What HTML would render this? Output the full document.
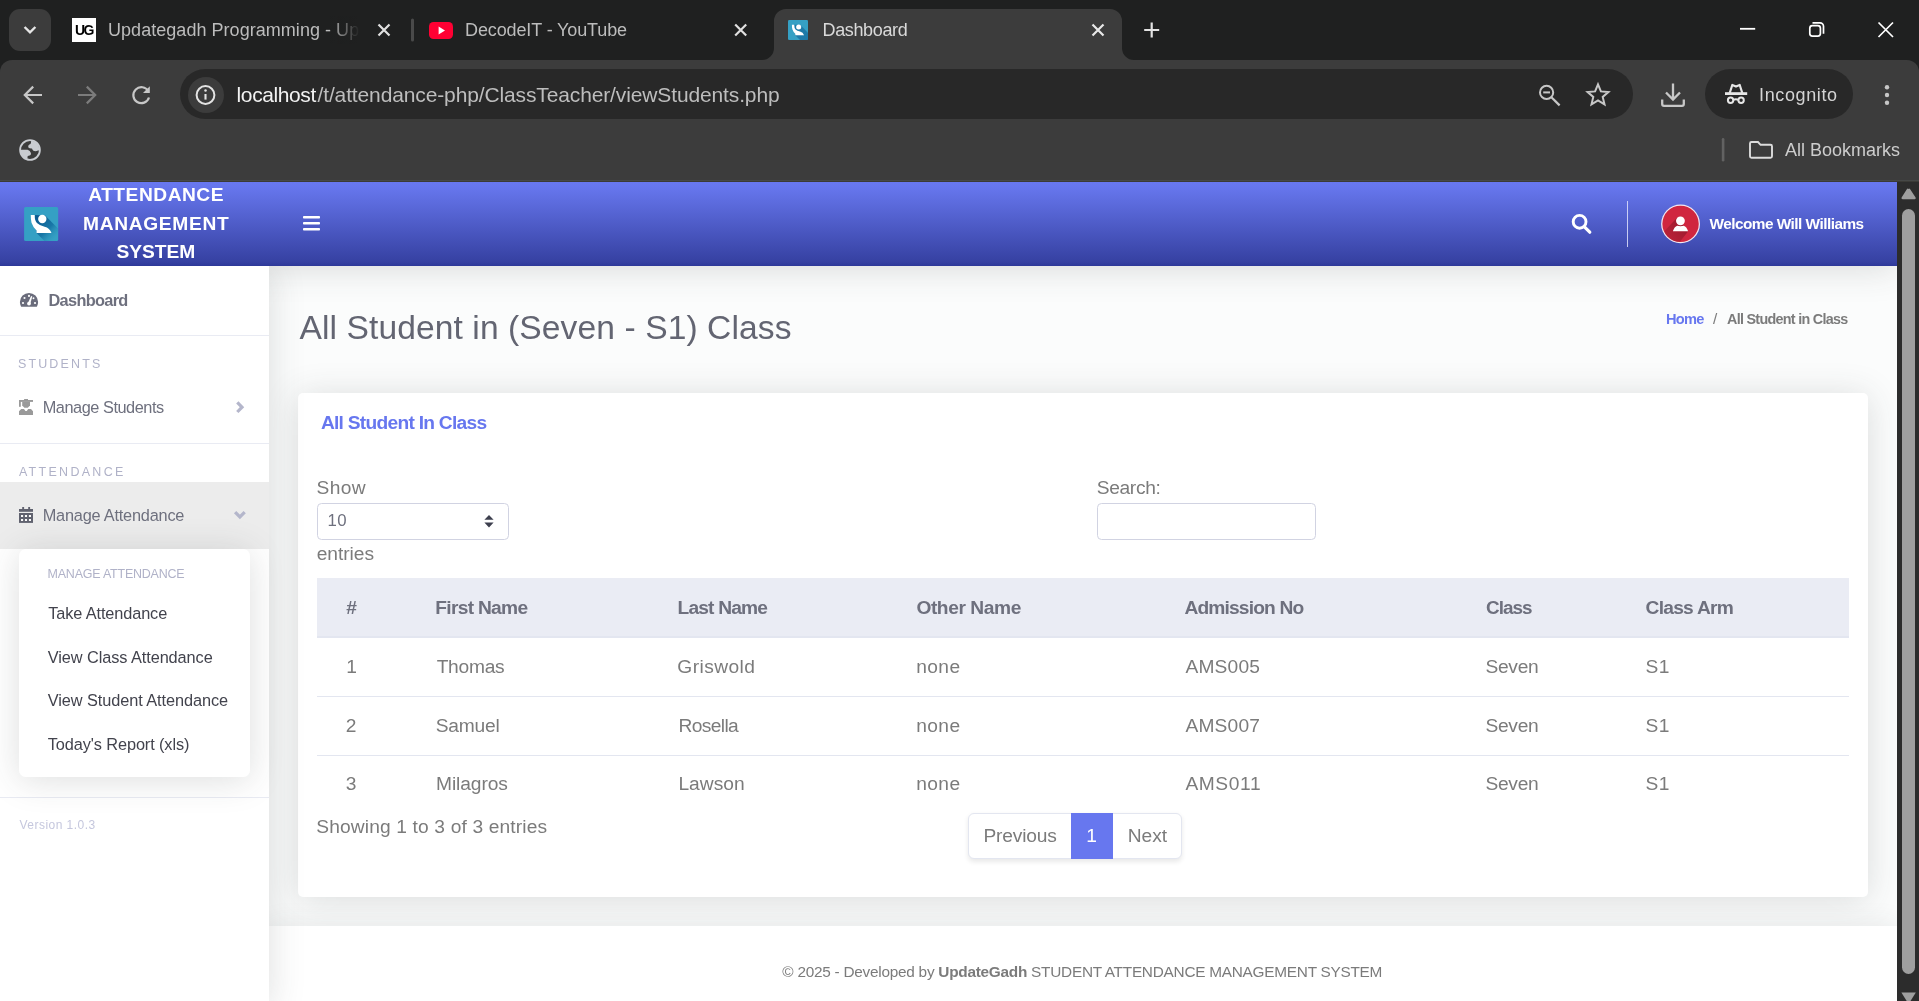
<!DOCTYPE html>
<html><head><meta charset="utf-8"><title>Dashboard</title>
<style>
html,body{margin:0;padding:0}
body{width:1919px;height:1001px;overflow:hidden;position:relative;background:#1f2020;font-family:"Liberation Sans",sans-serif}
.a{position:absolute}
.t{position:absolute;line-height:1;white-space:nowrap;transform-origin:0 0}
svg{position:absolute;overflow:visible}
</style></head><body>

<!-- ===== TAB STRIP ===== -->
<div class="a" style="left:9px;top:9px;width:42px;height:42px;border-radius:11px;background:#3c3c3c"></div>
<svg style="left:0;top:0" width="1919" height="182">
 <!-- tab search chevron -->
 <polyline points="24.6,27 30,32.4 35.4,27" fill="none" stroke="#e6e6e6" stroke-width="2.4"/>
 <!-- tab close Xs -->
 <g stroke="#e0e0e0" stroke-width="2.2" fill="none">
  <path d="M378.5,24.5 l11,11 m0,-11 l-11,11"/>
  <path d="M735.2,24.5 l11,11 m0,-11 l-11,11"/>
 </g>
 <!-- separator -->
 <rect x="411" y="18.5" width="3" height="23" rx="1.5" fill="#4a4a4a"/>
 <!-- active tab shape -->
 <path d="M762,60 A12,12 0 0 0 774,48 V21 A12,12 0 0 1 786,9 H1110 A12,12 0 0 1 1122,21 V48 A12,12 0 0 0 1134,60 Z" fill="#3c3c3c"/>
 <path d="M1092.5,24.5 l11,11 m0,-11 l-11,11" stroke="#e8e8e8" stroke-width="2.2" fill="none"/>
 <!-- plus -->
 <path d="M1144.2,30 h15 M1151.7,22.5 v15" stroke="#e3e3e3" stroke-width="2.2" fill="none"/>
 <!-- window controls -->
 <path d="M1740,28.8 h15.2" stroke="#fff" stroke-width="1.8"/>
 <path d="M1812.5,22.8 h7.5 a3.5,3.5 0 0 1 3.5,3.5 v7.5" stroke="#fff" stroke-width="1.7" fill="none"/>
 <rect x="1809.8" y="25.6" width="10.6" height="10.6" rx="2.6" stroke="#fff" stroke-width="1.7" fill="none"/>
 <path d="M1878.5,22.5 l14.5,14.5 m0,-14.5 l-14.5,14.5" stroke="#fff" stroke-width="1.7" fill="none"/>
</svg>
<!-- favicon 1: UG -->
<div class="a" style="left:72px;top:18px;width:24px;height:24px;background:#fff"></div>
<div class="t" style="left:74.5px;top:22.5px;font-size:14px;font-weight:700;color:#000;letter-spacing:-1.6px;will-change:transform">UG</div>
<div class="a" style="left:330px;top:16px;width:32px;height:28px;z-index:5;background:linear-gradient(90deg,rgba(31,32,32,0),#1f2020 92%)"></div>
<!-- favicon 2: youtube -->
<div class="a" style="left:429px;top:21.5px;width:24px;height:17px;border-radius:4.5px;background:#ff0033"></div>
<svg style="left:429px;top:21.5px" width="24" height="17"><path d="M9.6,4.6 L16,8.5 L9.6,12.4 Z" fill="#fff"/></svg>
<!-- favicon 3 -->
<svg style="left:788px;top:20px" width="20" height="20" viewBox="0 0 34 34">
  <rect x="0" y="0" width="34" height="34" rx="2" fill="#35a0c4"/>
  <path d="M10.5,8 L21,8.6 L34,21.6 V34 H20.4 L12.4,26 Z" fill="#16699d" opacity=".7"/>
  <circle cx="18.15" cy="11.95" r="4.3" fill="#fff"/>
  <path d="M6.66,8.03 H10.56 Q10.4,13.6 12.8,16 Q15.4,18.6 20.4,19.6 Q25.6,20.8 27.3,25.96 H12.4 V23.4 Q8.6,19.4 7.4,15.6 Q6.6,12.4 6.66,8.03 Z" fill="#fff"/>
</svg>

<!-- ===== TOOLBAR ===== -->
<div class="a" style="left:0;top:60px;width:1919px;height:122px;background:#3c3c3c;border-radius:12px 12px 0 0"></div>
<div class="a" style="left:0;top:180px;width:1919px;height:1px;background:#464847"></div>
<div class="a" style="left:0;top:181px;width:1919px;height:1px;background:#3b3b37"></div>
<div class="a" style="left:180px;top:69.2px;width:1453px;height:50.3px;border-radius:25px;background:#282828"></div>
<div class="a" style="left:187.5px;top:77px;width:36px;height:36px;border-radius:18px;background:#3c3c3c"></div>
<div class="a" style="left:1705px;top:69.2px;width:148px;height:50.3px;border-radius:25px;background:#282828"></div>
<svg style="left:0;top:0" width="1919" height="182" fill="none" stroke-linecap="butt">
 <!-- back -->
 <path d="M42,95 H25.5 M33.2,86.6 L24.8,95 L33.2,103.4" stroke="#c7c7c7" stroke-width="2.2"/>
 <!-- forward -->
 <path d="M78,95 H94.5 M86.8,86.6 L95.2,95 L86.8,103.4" stroke="#7c7c7c" stroke-width="2.2"/>
 <!-- reload -->
 <path d="M148.3,91.2 A8,8 0 1 0 149,97.5" stroke="#c7c7c7" stroke-width="2.2"/>
 <path d="M149.8,86.2 V93 H143 Z" fill="#c7c7c7" stroke="none"/>
 <!-- info -->
 <circle cx="205.5" cy="95" r="8.9" stroke="#e3e3e3" stroke-width="2"/>
 <path d="M205.5,94 v5.6" stroke="#e3e3e3" stroke-width="2.1"/>
 <circle cx="205.5" cy="90.6" r="1.25" fill="#e3e3e3" stroke="none"/>
 <!-- zoom -->
 <circle cx="1546.6" cy="92.4" r="6.6" stroke="#c7c7c7" stroke-width="2"/>
 <path d="M1551.4,97.2 L1559.6,105.4" stroke="#c7c7c7" stroke-width="2.2"/>
 <path d="M1543.2,92.4 h6.8" stroke="#c7c7c7" stroke-width="2"/>
 <!-- star -->
 <path d="M1598,84.4 L1600.9,91.4 L1608.4,92 L1602.7,96.9 L1604.5,104.3 L1598,100.3 L1591.5,104.3 L1593.3,96.9 L1587.6,92 L1595.1,91.4 Z" stroke="#c7c7c7" stroke-width="2" stroke-linejoin="miter"/>
 <!-- download -->
 <path d="M1673,83.5 V99 M1666,92.5 L1673,99.5 L1680,92.5" stroke="#c7c7c7" stroke-width="2.3"/>
 <path d="M1662.2,99.5 V104 a1.8,1.8 0 0 0 1.8,1.8 H1682 a1.8,1.8 0 0 0 1.8,-1.8 V99.5" stroke="#c7c7c7" stroke-width="2.3"/>
 <!-- incognito -->
 <rect x="1725" y="92.2" width="22.2" height="2.8" fill="#e6e6e6" stroke="none"/>
 <path d="M1729.7,93 L1732.3,85 L1736,86.6 L1739.7,85 L1742.3,93" stroke="#e6e6e6" stroke-width="2.2" stroke-linejoin="round" fill="none"/>
 <circle cx="1730.6" cy="100.2" r="2.7" stroke="#e6e6e6" stroke-width="2"/>
 <circle cx="1741.1" cy="100.2" r="2.7" stroke="#e6e6e6" stroke-width="2"/>
 <path d="M1733.3,99.8 Q1735.85,98.6 1738.4,99.8" stroke="#e6e6e6" stroke-width="1.9"/>
 <!-- dots -->
 <g fill="#c7c7c7" stroke="none"><circle cx="1887" cy="87.3" r="2.2"/><circle cx="1887" cy="95" r="2.2"/><circle cx="1887" cy="102.7" r="2.2"/></g>
 <!-- bookmarks bar -->
 <rect x="1721.8" y="138" width="2.6" height="23.5" rx="1.3" fill="#626262" stroke="none"/>
 <path d="M1750,156.2 V143.5 a1.5,1.5 0 0 1 1.5,-1.5 H1758 L1760.6,144.8 H1770.5 a1.5,1.5 0 0 1 1.5,1.5 V156.2 a1.5,1.5 0 0 1 -1.5,1.5 H1751.5 a1.5,1.5 0 0 1 -1.5,-1.5 Z" stroke="#dcdcdc" stroke-width="1.9"/>
 <!-- globe -->
 <circle cx="30" cy="150" r="9.9" fill="none" stroke="#c9ccd1" stroke-width="1.8"/>
 <clipPath id="glc"><circle cx="30" cy="150" r="9.6"/></clipPath>
 <g clip-path="url(#glc)" fill="#c9ccd1" stroke="none">
 <path d="M31.2,140 L41,140 L41,150 Q39,150.8 38,150.4 Q35.6,151.8 33.4,150.7 Q32.4,149.9 32,148.5 Q29.6,148.7 28.4,147.4 Q27.8,145.6 29.4,144.6 Q30.8,144.4 31,142.8 Z"/>
 <path d="M19,149.8 H27.6 Q30.2,150.6 30.9,153 Q31.2,155.2 29.6,155.6 L27.8,155.9 Q27.2,157 27.6,161 L19,161 Z"/>
 </g>
</svg>

<!-- ===== PAGE ===== -->
<div class="a" id="page" style="left:0;top:182px;width:1897px;height:819px;background:#fbfcfc;overflow:hidden">
 <!-- card -->
 <div class="a" style="left:298px;top:211px;width:1570px;height:504px;background:#fff;border-radius:5px;box-shadow:0 3px 33.6px 0 rgba(52,58,60,.17)"></div>
 <!-- footer -->
 <div class="a" style="left:269px;top:743.7px;width:1628px;height:80px;background:#fff;box-shadow:0 -4px 22px rgba(52,58,60,.085)"></div>
 <!-- header shadow -->
 <div class="a" style="left:0;top:0;width:1897px;height:84px;box-shadow:0 3px 33.6px 0 rgba(52,58,60,.17)"></div>
 <!-- sidebar -->
 <div class="a" style="left:0;top:84px;width:269px;height:740px;background:#fff;box-shadow:0 3px 33.6px 0 rgba(52,58,60,.17)"></div>
 <!-- header -->
 <div class="a" style="left:0;top:0;width:1897px;height:84px;background:linear-gradient(#6878f0 0%,#6777ee 5%,#3641a2 95%,#2d3899 100%)"></div>
</div>

<!-- sidebar details -->
<div class="a" style="left:0;top:335px;width:269px;height:1px;background:#e9ebf3"></div>
<div class="a" style="left:0;top:443px;width:269px;height:1px;background:#e9ebf3"></div>
<div class="a" style="left:0;top:797px;width:269px;height:1px;background:#e9ebf3"></div>
<div class="a" style="left:0;top:482.3px;width:269px;height:66.5px;background:#ececec"></div>
<div class="a" style="left:19px;top:548.8px;width:231px;height:228px;background:#fff;border-radius:6.5px;box-shadow:0 3px 33.6px 0 rgba(52,58,60,.17)"></div>

<!-- table -->
<div class="a" style="left:317px;top:578px;width:1532px;height:58.3px;background:#eaecf4;border-bottom:2px solid #e3e6f0"></div>
<div class="a" style="left:317px;top:696px;width:1532px;height:1px;background:#e3e6f0"></div>
<div class="a" style="left:317px;top:754.7px;width:1532px;height:1px;background:#e3e6f0"></div>
<!-- select + search -->
<div class="a" style="left:317px;top:503px;width:189.6px;height:34.8px;border:1px solid #d1d3e2;border-radius:4.5px;background:#fff"></div>
<svg style="left:484px;top:515px" width="10" height="13"><path d="M5,0 L9.6,4.8 H0.4 Z M0.4,7.6 H9.6 L5,12.4 Z" fill="#3d3f4e"/></svg>
<div class="a" style="left:1097.2px;top:503px;width:216.6px;height:34.8px;border:1px solid #d1d3e2;border-radius:4.5px;background:#fff"></div>
<!-- pagination -->
<div class="a" style="left:967.6px;top:813px;width:212px;height:44px;border:1px solid #e3e6f0;border-radius:6px;background:#fff;box-shadow:0 2.4px 4.8px rgba(0,0,0,.09)"></div>
<div class="a" style="left:1071px;top:813px;width:42px;height:46px;background:#6777ef"></div>

<!-- header items -->
<svg style="left:23.75px;top:206.9px" width="34.3" height="34.1" viewBox="0 0 34 34">
 <defs><linearGradient id="lgg" gradientUnits="userSpaceOnUse" x1="13" y1="13" x2="31" y2="31"><stop offset="0" stop-color="#0d5c92" stop-opacity="1"/><stop offset=".55" stop-color="#1470a2" stop-opacity=".85"/><stop offset="1" stop-color="#2a90b8" stop-opacity="0"/></linearGradient><clipPath id="lgc"><rect x="0" y="0" width="34" height="34" rx="1.5"/></clipPath></defs><g>
  <rect x="0" y="0" width="34" height="34" rx="1.5" fill="#35a0c4"/>
  <path d="M10.5,8 L21,8.6 L40,27.6 V40 H26.4 L12.4,26 Z" fill="url(#lgg)" clip-path="url(#lgc)"/>
  <circle cx="18.15" cy="11.95" r="4.15" fill="#fff"/>
  <path d="M6.66,8.03 H10.56 Q10.4,13.6 12.8,16 Q15.4,18.6 20.4,19.6 Q25.6,20.8 27.3,25.96 H12.4 V23.4 Q8.6,19.4 7.4,15.6 Q6.6,12.4 6.66,8.03 Z" fill="#fff"/>
 </g>
</svg>
<svg style="left:0;top:0" width="1919" height="1001">
 <!-- hamburger -->
 <g fill="#fff"><rect x="303" y="216" width="17" height="2.6" rx=".8"/><rect x="303" y="222" width="17" height="2.6" rx=".8"/><rect x="303" y="228" width="17" height="2.6" rx=".8"/></g>
 <!-- search -->
 <circle cx="1579.6" cy="221.8" r="6.4" fill="none" stroke="#fff" stroke-width="2.9"/>
 <path d="M1584.4,226.8 L1589.8,232.2" stroke="#fff" stroke-width="3.2" stroke-linecap="round"/>
 <!-- divider -->
 <rect x="1627" y="201" width="1" height="46" fill="#dfe2fb" opacity=".85"/>
 <!-- avatar -->
 <circle cx="1680.55" cy="223.9" r="19.4" fill="#f3e9f3"/>
 <circle cx="1680.55" cy="223.9" r="18.2" fill="#d0263f"/>
 <clipPath id="avc"><circle cx="1680.55" cy="223.9" r="18.2"/></clipPath>
 <linearGradient id="avg" x1="1" y1="0" x2="0" y2="1"><stop offset=".2" stop-color="#8d1729" stop-opacity=".72"/><stop offset=".9" stop-color="#8d1729" stop-opacity=".12"/></linearGradient>
 <g clip-path="url(#avc)"><path d="M1677,217.8 L1660,236 L1672,252 L1688,231.4 L1684,226 Z" fill="url(#avg)"/></g>
 <circle cx="1680.45" cy="220.8" r="4.4" fill="#fff"/>
 <path d="M1672.9,231.2 Q1674.4,226.6 1677.2,225.7 Q1680.5,226.6 1683.8,225.7 Q1686.6,226.6 1688.1,231.2 Z" fill="#fff"/>

 <!-- sidebar icons -->
 <!-- tachometer -->
 <path d="M29,292.9 A9.1,9.1 0 0 0 19.9,302 Q19.9,304.6 20.9,306.2 Q21.2,306.8 21.8,306.8 H36.2 Q36.8,306.8 37.1,306.2 Q38.1,304.6 38.1,302 A9.1,9.1 0 0 0 29,292.9 Z" fill="#6a6c7b"/>
 <g fill="#fff"><circle cx="29" cy="295.9" r="1.05"/><circle cx="24.5" cy="298" r="1.05"/><circle cx="33.5" cy="298.2" r=".95"/><circle cx="23" cy="303" r="1.1"/><circle cx="35" cy="303" r="1.1"/><circle cx="29" cy="303.6" r="1.9"/><path d="M28.1,302.8 L31.1,296 L32.3,296.4 L30.3,303.4 Z"/></g>
 <!-- user graduate -->
 <g fill="#9a9a9a">
  <rect x="19" y="400" width="14" height="1.9"/><rect x="24.1" y="399" width="3.9" height="1.4"/>
  <rect x="19" y="400" width="1.8" height="6.8"/>
  <path d="M22.2,401.8 H30 V405.6 L27.8,407.8 H24.4 L22.2,405.6 Z"/>
  <path d="M19,414.9 V411.2 L21.2,409 H24 L25.4,410.9 H26.8 L28.2,409 H31 L33,411.2 V414.9 Z"/>
 </g>
 <!-- chevron right -->
 <path d="M237.3,402.4 L242,407.2 L237.3,412" fill="none" stroke="#b4b6cb" stroke-width="3.2"/>
 <!-- calendar -->
 <g fill="#60626f">
  <rect x="19" y="509" width="14" height="2.8"/>
  <rect x="22.2" y="507" width="1.9" height="2.4"/><rect x="28.2" y="507" width="1.9" height="2.4"/>
  <rect x="19" y="513" width="14" height="9.9"/>
 </g>
 <g fill="#fbfbfb"><rect x="21" y="515" width="2.1" height="2"/><rect x="24.95" y="515" width="2.1" height="2"/><rect x="28.9" y="515" width="2.1" height="2"/><rect x="21" y="519" width="2.1" height="2"/><rect x="24.95" y="519" width="2.1" height="2"/><rect x="28.9" y="519" width="2.1" height="2"/></g>
 <!-- chevron down -->
 <path d="M235.1,512.2 L239.9,517 L244.7,512.2" fill="none" stroke="#b4b6cb" stroke-width="3.2"/>
</svg>

<!-- scrollbar -->
<div class="a" style="left:1897px;top:182px;width:22px;height:819px;background:#2c2c2c"></div>
<div class="a" style="left:1902px;top:209px;width:13px;height:765px;border-radius:6.5px;background:#9f9f9f"></div>
<svg style="left:1897px;top:182px" width="22" height="819"><path d="M11.5,7 Q12.3,6.2 13,7 L18.6,15.5 Q19.2,17 17.6,17.2 H5.6 Q4,17 4.6,15.5 L10,7 Q10.8,6.2 11.5,7 Z" fill="#9f9f9f"/><path d="M4.4,810.5 H18.8 L11.6,822 Z" fill="#9f9f9f"/></svg>

<div id="txt" class="a" style="left:0;top:0;width:1919px;height:1001px;will-change:transform">
<div class="t" style="left:108.0px;top:21.36px;font-size:18px;color:#bcbcbc;letter-spacing:0.039px;">Updategadh Programming - Up</div>
<div class="t" style="left:465.0px;top:21.36px;font-size:18px;color:#bcbcbc;letter-spacing:-0.117px;">DecodeIT - YouTube</div>
<div class="t" style="left:822.5px;top:21.36px;font-size:18px;color:#dadada;letter-spacing:-0.349px;">Dashboard</div>
<div class="t" style="left:236.6px;top:83.92px;font-size:21px;color:#f2f2f2;letter-spacing:-0.4px;">localhost</div>
<div class="t" style="left:317.5px;top:83.92px;font-size:21px;color:#bdbdbd;letter-spacing:-0.13px;">/t/attendance-php/ClassTeacher/viewStudents.php</div>
<div class="t" style="left:1759.0px;top:85.76px;font-size:18px;color:#d4d4d4;letter-spacing:0.625px;">Incognito</div>
<div class="t" style="left:1785.0px;top:140.76px;font-size:18px;color:#cdcdcd;">All Bookmarks</div>
<div class="t" style="left:88.2px;top:184.75px;font-size:19.2px;color:#fff;font-weight:700;letter-spacing:0.511px;">ATTENDANCE</div>
<div class="t" style="left:83.0px;top:213.55px;font-size:19.2px;color:#fff;font-weight:700;letter-spacing:0.667px;">MANAGEMENT</div>
<div class="t" style="left:116.6px;top:242.35px;font-size:19.2px;color:#fff;font-weight:700;letter-spacing:-0.04px;">SYSTEM</div>
<div class="t" style="left:1709.5px;top:216.0px;font-size:15.36px;color:#fff;font-weight:700;letter-spacing:-0.52px;">Welcome Will Williams</div>
<div class="t" style="left:299.5px;top:310.56px;font-size:33.6px;color:#636572;letter-spacing:0.093px;">All Student in (Seven - S1) Class</div>
<div class="t" style="left:1665.6px;top:311.0px;font-size:15.36px;color:#6777ef;font-weight:700;letter-spacing:-0.768px;transform:scaleX(0.9512);">Home</div>
<div class="t" style="left:1712.9px;top:311.0px;font-size:15.36px;color:#7b7b7b;">/</div>
<div class="t" style="left:1727.4px;top:311.0px;font-size:15.36px;color:#7b7b7b;font-weight:700;letter-spacing:-0.768px;transform:scaleX(0.935);">All Student in Class</div>
<div class="t" style="left:320.9px;top:412.5px;font-size:19.2px;color:#6777ef;font-weight:700;letter-spacing:-0.737px;">All Student In Class</div>
<div class="t" style="left:316.5px;top:477.75px;font-size:19.2px;color:#7b7b7b;letter-spacing:0.333px;">Show</div>
<div class="t" style="left:327.5px;top:512.68px;font-size:16.8px;color:#6e707e;letter-spacing:0.5px;">10</div>
<div class="t" style="left:316.75px;top:543.5px;font-size:19.2px;color:#7b7b7b;letter-spacing:-0.05px;">entries</div>
<div class="t" style="left:1096.7px;top:478.15px;font-size:19.2px;color:#7b7b7b;letter-spacing:-0.333px;">Search:</div>
<div class="t" style="left:346.25px;top:597.65px;font-size:19.2px;color:#6e707e;font-weight:700;">#</div>
<div class="t" style="left:435.3px;top:597.65px;font-size:19.2px;color:#6e707e;font-weight:700;letter-spacing:-0.711px;">First Name</div>
<div class="t" style="left:677.6px;top:597.65px;font-size:19.2px;color:#6e707e;font-weight:700;letter-spacing:-0.849px;">Last Name</div>
<div class="t" style="left:916.4px;top:597.65px;font-size:19.2px;color:#6e707e;font-weight:700;letter-spacing:-0.422px;">Other Name</div>
<div class="t" style="left:1184.4px;top:597.65px;font-size:19.2px;color:#6e707e;font-weight:700;letter-spacing:-0.836px;">Admission No</div>
<div class="t" style="left:1485.5px;top:597.65px;font-size:19.2px;color:#6e707e;font-weight:700;letter-spacing:-0.96px;transform:scaleX(0.9838);">Class</div>
<div class="t" style="left:1645.6px;top:597.65px;font-size:19.2px;color:#6e707e;font-weight:700;letter-spacing:-0.75px;">Class Arm</div>
<div class="t" style="left:346.2px;top:656.75px;font-size:19.2px;color:#7b7b7b;">1</div>
<div class="t" style="left:436.65px;top:656.75px;font-size:19.2px;color:#7b7b7b;letter-spacing:-0.26px;">Thomas</div>
<div class="t" style="left:677.3px;top:656.75px;font-size:19.2px;color:#7b7b7b;letter-spacing:0.428px;">Griswold</div>
<div class="t" style="left:916.2px;top:656.75px;font-size:19.2px;color:#7b7b7b;letter-spacing:0.4px;">none</div>
<div class="t" style="left:1185.4px;top:656.75px;font-size:19.2px;color:#7b7b7b;letter-spacing:0.2px;">AMS005</div>
<div class="t" style="left:1485.5px;top:656.75px;font-size:19.2px;color:#7b7b7b;letter-spacing:-0.3px;">Seven</div>
<div class="t" style="left:1645.6px;top:656.75px;font-size:19.2px;color:#7b7b7b;letter-spacing:0.4px;">S1</div>
<div class="t" style="left:345.8px;top:715.55px;font-size:19.2px;color:#7b7b7b;">2</div>
<div class="t" style="left:435.65px;top:715.55px;font-size:19.2px;color:#7b7b7b;letter-spacing:-0.18px;">Samuel</div>
<div class="t" style="left:678.4px;top:715.55px;font-size:19.2px;color:#7b7b7b;letter-spacing:-0.6px;">Rosella</div>
<div class="t" style="left:916.2px;top:715.55px;font-size:19.2px;color:#7b7b7b;letter-spacing:0.4px;">none</div>
<div class="t" style="left:1185.4px;top:715.55px;font-size:19.2px;color:#7b7b7b;letter-spacing:0.2px;">AMS007</div>
<div class="t" style="left:1485.5px;top:715.55px;font-size:19.2px;color:#7b7b7b;letter-spacing:-0.3px;">Seven</div>
<div class="t" style="left:1645.6px;top:715.55px;font-size:19.2px;color:#7b7b7b;letter-spacing:0.4px;">S1</div>
<div class="t" style="left:345.8px;top:774.15px;font-size:19.2px;color:#7b7b7b;">3</div>
<div class="t" style="left:436.0px;top:774.15px;font-size:19.2px;color:#7b7b7b;letter-spacing:-0.085px;">Milagros</div>
<div class="t" style="left:678.4px;top:774.15px;font-size:19.2px;color:#7b7b7b;letter-spacing:0.04px;">Lawson</div>
<div class="t" style="left:916.2px;top:774.15px;font-size:19.2px;color:#7b7b7b;letter-spacing:0.4px;">none</div>
<div class="t" style="left:1185.4px;top:774.15px;font-size:19.2px;color:#7b7b7b;letter-spacing:0.6px;">AMS011</div>
<div class="t" style="left:1485.5px;top:774.15px;font-size:19.2px;color:#7b7b7b;letter-spacing:-0.3px;">Seven</div>
<div class="t" style="left:1645.6px;top:774.15px;font-size:19.2px;color:#7b7b7b;letter-spacing:0.4px;">S1</div>
<div class="t" style="left:316.3px;top:816.95px;font-size:19.2px;color:#7b7b7b;letter-spacing:0.139px;">Showing 1 to 3 of 3 entries</div>
<div class="t" style="left:983.4px;top:825.75px;font-size:19.2px;color:#7b7b7b;letter-spacing:-0.171px;">Previous</div>
<div class="t" style="left:1086.25px;top:825.75px;font-size:19.2px;color:#fff;">1</div>
<div class="t" style="left:1127.8px;top:825.75px;font-size:19.2px;color:#7b7b7b;letter-spacing:-0.067px;">Next</div>
<div class="t" style="left:782.3px;top:964.3px;font-size:15.36px;color:#7b7b7b;letter-spacing:-0.253px;">© 2025 - Developed by <b>UpdateGadh</b> STUDENT ATTENDANCE MANAGEMENT SYSTEM</div>
<div class="t" style="left:48.5px;top:291.79px;font-size:16.32px;color:#6e707e;font-weight:700;letter-spacing:-0.675px;">Dashboard</div>
<div class="t" style="left:17.9px;top:358.44px;font-size:12.48px;color:#b0b2c8;letter-spacing:2.172px;">STUDENTS</div>
<div class="t" style="left:42.7px;top:399.19px;font-size:16.32px;color:#6e707e;letter-spacing:-0.458px;">Manage Students</div>
<div class="t" style="left:18.9px;top:465.84px;font-size:12.48px;color:#b0b2c8;letter-spacing:2.311px;">ATTENDANCE</div>
<div class="t" style="left:42.7px;top:507.19px;font-size:16.32px;color:#6e707e;letter-spacing:-0.212px;">Manage Attendance</div>
<div class="t" style="left:47.6px;top:568.44px;font-size:12.48px;color:#b0b2c8;letter-spacing:-0.212px;">MANAGE ATTENDANCE</div>
<div class="t" style="left:48.2px;top:604.79px;font-size:16.32px;color:#42434d;letter-spacing:-0.115px;">Take Attendance</div>
<div class="t" style="left:47.8px;top:649.19px;font-size:16.32px;color:#42434d;letter-spacing:-0.08px;">View Class Attendance</div>
<div class="t" style="left:47.8px;top:692.19px;font-size:16.32px;color:#42434d;letter-spacing:-0.073px;">View Student Attendance</div>
<div class="t" style="left:47.8px;top:735.99px;font-size:16.32px;color:#42434d;letter-spacing:-0.105px;">Today's Report (xls)</div>
<div class="t" style="left:19.5px;top:819.14px;font-size:12px;color:#c5c7dd;letter-spacing:0.466px;">Version 1.0.3</div>
</div>
</body></html>
